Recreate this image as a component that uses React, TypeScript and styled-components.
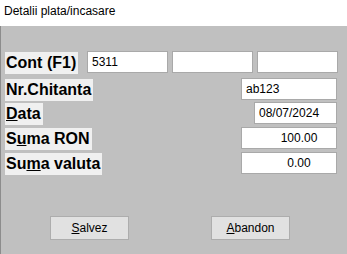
import React, { FC } from 'react';
import styled, { createGlobalStyle } from 'styled-components';

const GlobalStyle = createGlobalStyle`
  html, body {
    margin: 0;
    padding: 0;
    background: #c0c0c0;
  }
  * {
    box-sizing: border-box;
  }
`;

const Window = styled.div`
  width: 347px;
  height: 254px;
  background: #c0c0c0;
  display: flex;
  flex-direction: column;
  font-family: 'Liberation Sans', Arial, sans-serif;
  overflow: hidden;
`;

const TitleBar = styled.div`
  height: 26px;
  background: #ffffff;
  color: #000;
  font-size: 12px;
  padding: 4px 0 0 4px;
  flex-shrink: 0;
`;

const Body = styled.div`
  flex: 1;
  border-left: 1px solid #8c8c8c;
  padding: 25px 9px 0 4px;
  display: flex;
  flex-direction: column;
`;

const Row = styled.div<{ $gap: number; $inset?: number }>`
  display: flex;
  align-items: flex-start;
  justify-content: space-between;
  height: 22px;
  margin-bottom: ${(p) => p.$gap}px;
  padding-right: ${(p) => p.$inset || 0}px;
`;

const Label = styled.div`
  margin-top: 1px;
  height: 22px;
  background: #f0f0f0;
  color: #000;
  font-weight: bold;
  font-size: 16px;
  line-height: 22px;
  padding: 0 2px 0 1px;
  white-space: nowrap;
`;

const Fields = styled.div`
  display: flex;
  gap: 4px;
`;

const Field = styled.div<{ $w: number; $align?: 'left' | 'center' }>`
  width: ${(p) => p.$w}px;
  height: 22px;
  background: #ffffff;
  border: 1px solid #a9a9a9;
  font-size: 12px;
  line-height: 20px;
  color: #000;
  padding: ${(p) => (p.$align === 'center' ? '0 0 0 20px' : '0 0 0 4px')};
  text-align: ${(p) => p.$align || 'left'};
`;

const Buttons = styled.div`
  display: flex;
  gap: 82px;
  padding-left: 45px;
  margin-top: 42px;
`;

const Button = styled.div`
  width: 79px;
  height: 24px;
  background: #e1e1e1;
  border: 1px solid #adadad;
  font-size: 12px;
  line-height: 22px;
  text-align: center;
  color: #000;
`;

const U = styled.span`
  text-decoration: underline;
`;

export const App: FC = () => {
  return (
    <>
      <GlobalStyle />
      <Window>
        <TitleBar>Detalii plata/incasare</TitleBar>
        <Body>
          <Row $gap={5}>
            <Label>Cont (F1)</Label>
            <Fields>
              <Field $w={81}>5311</Field>
              <Field $w={81} />
              <Field $w={81} />
            </Fields>
          </Row>
          <Row $gap={2} $inset={1}>
            <Label>Nr.Chitanta</Label>
            <Field $w={96}>ab123</Field>
          </Row>
          <Row $gap={3} $inset={1}>
            <Label>
              <U>D</U>ata
            </Label>
            <Field $w={83}>08/07/2024</Field>
          </Row>
          <Row $gap={3} $inset={1}>
            <Label>
              S<U>u</U>ma RON
            </Label>
            <Field $w={96} $align="center">100.00</Field>
          </Row>
          <Row $gap={0} $inset={1}>
            <Label>
              Su<U>m</U>a valuta
            </Label>
            <Field $w={96} $align="center">0.00</Field>
          </Row>
          <Buttons>
            <Button>
              <U>S</U>alvez
            </Button>
            <Button>
              <U>A</U>bandon
            </Button>
          </Buttons>
        </Body>
      </Window>
    </>
  );
};

export default App;
